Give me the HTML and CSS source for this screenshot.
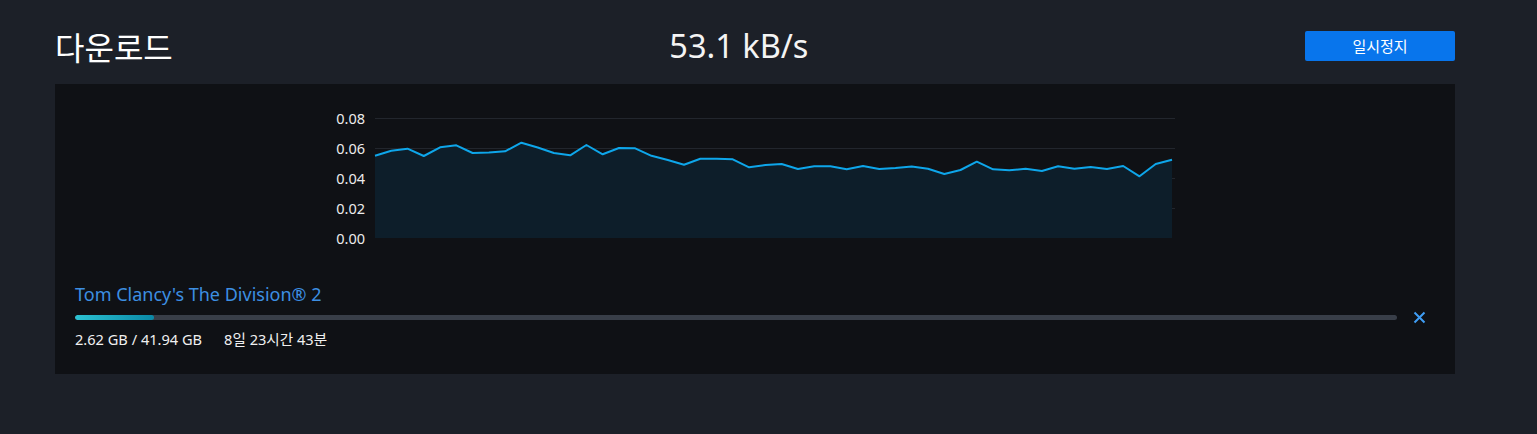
FILE: index.html
```html
<!DOCTYPE html>
<html lang="ko">
<head>
<meta charset="utf-8">
<title>다운로드</title>
<link rel="stylesheet" href="styles.css">
</head>
<body>
<main class="page">
  <header class="header">
    <h1 class="title">다운로드</h1>
    <div class="speed">53.1 kB/s</div>
    <button class="pause">일시정지</button>
  </header>
  <section class="panel">
    <svg class="chart" width="860" height="150" viewBox="0 0 860 150">
      <g class="grid">
        <line x1="55" y1="18.5" x2="855" y2="18.5"/>
        <line x1="55" y1="48.5" x2="855" y2="48.5"/>
        <line x1="55" y1="78.5" x2="855" y2="78.5"/>
        <line x1="55" y1="108.5" x2="855" y2="108.5"/>
      </g>
      <polygon class="area" points="55,55.7 71.3,50.7 87.5,48.7 103.8,56 120.1,47.3 136.3,45.3 152.6,53 168.9,52.5 185.1,51.3 201.4,42.7 217.7,47.5 233.9,53 250.2,55.3 266.4,45 282.7,54.3 299,48 315.2,48.3 331.5,55.8 347.8,60 364,64.7 380.3,58.7 396.6,58.7 412.8,59.3 429.1,67.3 445.4,65 461.6,64 477.9,69 494.2,66.3 510.4,66.3 526.7,69.3 543,66 559.2,69 575.5,68 591.7,66.5 608,68.7 624.3,74 640.5,70 656.8,61.7 673.1,69.3 689.3,70.3 705.6,68.7 721.9,71 738.1,66.3 754.4,68.7 770.7,67 786.9,69 803.2,66 819.5,76.3 835.7,64 852,59.7 852,138 55,138"/>
      <polyline class="line" points="55,55.7 71.3,50.7 87.5,48.7 103.8,56 120.1,47.3 136.3,45.3 152.6,53 168.9,52.5 185.1,51.3 201.4,42.7 217.7,47.5 233.9,53 250.2,55.3 266.4,45 282.7,54.3 299,48 315.2,48.3 331.5,55.8 347.8,60 364,64.7 380.3,58.7 396.6,58.7 412.8,59.3 429.1,67.3 445.4,65 461.6,64 477.9,69 494.2,66.3 510.4,66.3 526.7,69.3 543,66 559.2,69 575.5,68 591.7,66.5 608,68.7 624.3,74 640.5,70 656.8,61.7 673.1,69.3 689.3,70.3 705.6,68.7 721.9,71 738.1,66.3 754.4,68.7 770.7,67 786.9,69 803.2,66 819.5,76.3 835.7,64 852,59.7"/>
      <g class="labels">
        <text x="45" y="18">0.08</text>
        <text x="45" y="48">0.06</text>
        <text x="45" y="78">0.04</text>
        <text x="45" y="108">0.02</text>
        <text x="45" y="138">0.00</text>
      </g>
    </svg>
    <div class="item">
      <div class="game">Tom Clancy's The Division® 2</div>
      <div class="bar-row">
        <div class="bar"><div class="fill" style="width: 6%"></div></div>
        <button class="close" aria-label="취소">
          <svg width="13" height="13" viewBox="0 0 13 13"><path d="M1.5 1.5 L11.5 11.5 M11.5 1.5 L1.5 11.5"/></svg>
        </button>
      </div>
      <div class="info">
        <span>2.62 GB / 41.94 GB</span>
        <span>8일 23시간 43분</span>
      </div>
    </div>
  </section>
</main>
</body>
</html>
```
FILE: styles.css
```css
html, body {
  margin: 0;
  padding: 0;
  background: #1c2028;
  color: #ffffff;
  font-family: "Noto Sans", "Noto Sans CJK KR", sans-serif;
}

.page {
  width: 1400px;
  margin-left: 55px;
}

.header {
  box-sizing: border-box;
  height: 84px;
  padding-top: 8px;
  display: flex;
  align-items: center;
  justify-content: space-between;
}

.title {
  margin: 0;
  font-family: "Noto Sans CJK KR", sans-serif;
  font-weight: 400;
  font-size: 32px;
  line-height: 40px;
  color: #ffffff;
}

.speed {
  font-size: 32.5px;
  line-height: 40px;
  color: #f4f4f4;
}

.pause {
  width: 150px;
  height: 30px;
  border: none;
  border-radius: 2px;
  background: #0875ec;
  color: #ffffff;
  font-family: "Noto Sans CJK KR", sans-serif;
  font-size: 15px;
  padding: 0;
  margin-top: -1px;
}

.panel {
  background: #0f1115;
  height: 290px;
  box-sizing: border-box;
  padding: 16px 24px 25px 20px;
  display: flex;
  flex-direction: column;
}

.chart {
  display: block;
  margin-left: 245px;
}

.grid line {
  stroke: #22262d;
  stroke-width: 1;
}

.area {
  fill: #0d1e2a;
}

.line {
  fill: none;
  stroke: #0ea6ea;
  stroke-width: 2;
  stroke-linejoin: round;
}

.labels text {
  fill: #ececec;
  font-family: "Noto Sans", sans-serif;
  font-size: 14.5px;
  text-anchor: end;
  dominant-baseline: central;
}

.item {
  margin-top: 33px;
}

.game {
  font-size: 18px;
  line-height: 22px;
  color: #3d8fe2;
  margin-bottom: 10px;
}

.bar-row {
  display: flex;
  align-items: center;
}

.bar {
  flex: 1;
  height: 5px;
  border-radius: 3px;
  background: #383e48;
  overflow: hidden;
}

.fill {
  height: 100%;
  border-radius: 3px;
  background: linear-gradient(90deg, #2cc2d2, #0a88a6);
}

.close {
  width: 24px;
  height: 24px;
  margin: -10px 0 -10px 10px;
  padding: 0;
  border: none;
  background: transparent;
  display: flex;
  align-items: center;
  justify-content: center;
}

.close path {
  stroke: #3f9df4;
  stroke-width: 2;
  fill: none;
}

.info {
  margin-top: 9px;
  font-size: 14.6px;
  line-height: 20px;
  color: #f0f0f0;
  display: flex;
  gap: 22px;
}
```
